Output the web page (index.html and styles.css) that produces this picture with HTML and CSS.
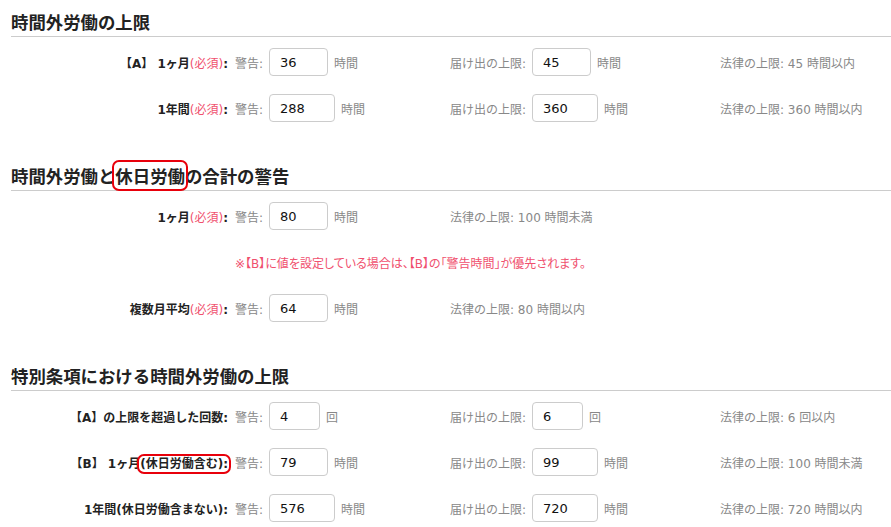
FILE: index.html
```html
<!DOCTYPE html>
<html lang="ja">
<head>
  <meta charset="UTF-8">
  <title>時間外労働の設定</title>
  <link rel="stylesheet" href="styles.css">
</head>
<body>

  <section class="section">
    <h2 class="section-title">時間外労働の上限</h2>
    <div class="form-grid">
      <div class="label">【A】 1ヶ月<span class="required">(必須)</span>:</div>
      <div class="field">警告: <input class="num" type="text" value="36"> <span>時間</span></div>
      <div class="field">届け出の上限: <input class="num" type="text" value="45"> <span>時間</span></div>
      <div class="law">法律の上限: 45 時間以内</div>

      <div class="label">1年間<span class="required">(必須)</span>:</div>
      <div class="field">警告: <input class="num wide" type="text" value="288"> <span>時間</span></div>
      <div class="field">届け出の上限: <input class="num wide" type="text" value="360"> <span>時間</span></div>
      <div class="law">法律の上限: 360 時間以内</div>
    </div>
  </section>

  <section class="section">
    <h2 class="section-title">時間外労働と<span class="mark">休日労働</span>の合計の警告</h2>
    <div class="form-grid">
      <div class="label">1ヶ月<span class="required">(必須)</span>:</div>
      <div class="field">警告: <input class="num" type="text" value="80"> <span>時間</span></div>
      <div class="law">法律の上限: 100 時間未満</div>
      <div></div>

      <div class="label"></div>
      <div class="note">※【B】に値を設定している場合は、【B】の「警告時間」が優先されます。</div>

      <div class="label">複数月平均<span class="required">(必須)</span>:</div>
      <div class="field">警告: <input class="num" type="text" value="64"> <span>時間</span></div>
      <div class="law">法律の上限: 80 時間以内</div>
      <div></div>
    </div>
  </section>

  <section class="section">
    <h2 class="section-title">特別条項における時間外労働の上限</h2>
    <div class="form-grid">
      <div class="label">【A】の上限を超過した回数:</div>
      <div class="field">警告: <input class="num narrow" type="text" value="4"> <span>回</span></div>
      <div class="field">届け出の上限: <input class="num narrow" type="text" value="6"> <span>回</span></div>
      <div class="law">法律の上限: 6 回以内</div>

      <div class="label">【B】 1ヶ月<span class="mark">(休日労働含む):</span></div>
      <div class="field">警告: <input class="num" type="text" value="79"> <span>時間</span></div>
      <div class="field">届け出の上限: <input class="num wide" type="text" value="99"> <span>時間</span></div>
      <div class="law">法律の上限: 100 時間未満</div>

      <div class="label">1年間(休日労働含まない):</div>
      <div class="field">警告: <input class="num wide" type="text" value="576"> <span>時間</span></div>
      <div class="field">届け出の上限: <input class="num wide" type="text" value="720"> <span>時間</span></div>
      <div class="law">法律の上限: 720 時間以内</div>
    </div>
  </section>

</body>
</html>
```

FILE: styles.css
```css
* { box-sizing: border-box; margin: 0; padding: 0; }
body {
  font-family: "DejaVu Sans", "Noto Sans CJK JP", sans-serif;
  font-size: 12px;
  color: #222;
  background: #fff;
  padding: 10px 0 0 11px;
}

.section {
  margin-bottom: 42px;
}

.section:last-child {
  margin-bottom: 0;
}

.section-title {
  font-family: "Noto Sans CJK JP", sans-serif;
  font-size: 17.4px;
  font-weight: bold;
  line-height: 24px;
  color: #222;
  padding-bottom: 2px;
  border-bottom: 1px solid #ccc;
  margin-bottom: 11px;
}

.mark {
  outline: 2px solid #e8000b;
  outline-offset: 1px;
  border-radius: 4px;
}

.form-grid {
  display: grid;
  grid-template-columns: 217px 208px 263px 1fr;
  grid-auto-rows: 28px;
  column-gap: 7px;
  row-gap: 18px;
  align-items: center;
}

.label {
  text-align: right;
  font-weight: bold;
  color: #222;
  white-space: nowrap;
}

.required {
  color: #f0506e;
  font-weight: normal;
}

.field {
  display: flex;
  align-items: center;
  gap: 6px;
  color: #888;
  white-space: nowrap;
}

.num {
  width: 59px;
  height: 28px;
  padding: 0 10px;
  border: 1px solid #ccc;
  border-radius: 4px;
  font-family: "DejaVu Sans", "Noto Sans CJK JP", sans-serif;
  font-size: 13px;
  color: #111;
  background: #fff;
}

.num.wide { width: 66px; }
.num.narrow { width: 51px; }

.law {
  color: #888;
  white-space: nowrap;
}

.note {
  grid-column: 2 / -1;
  color: #f0506e;
  font-feature-settings: "palt";
}
```
